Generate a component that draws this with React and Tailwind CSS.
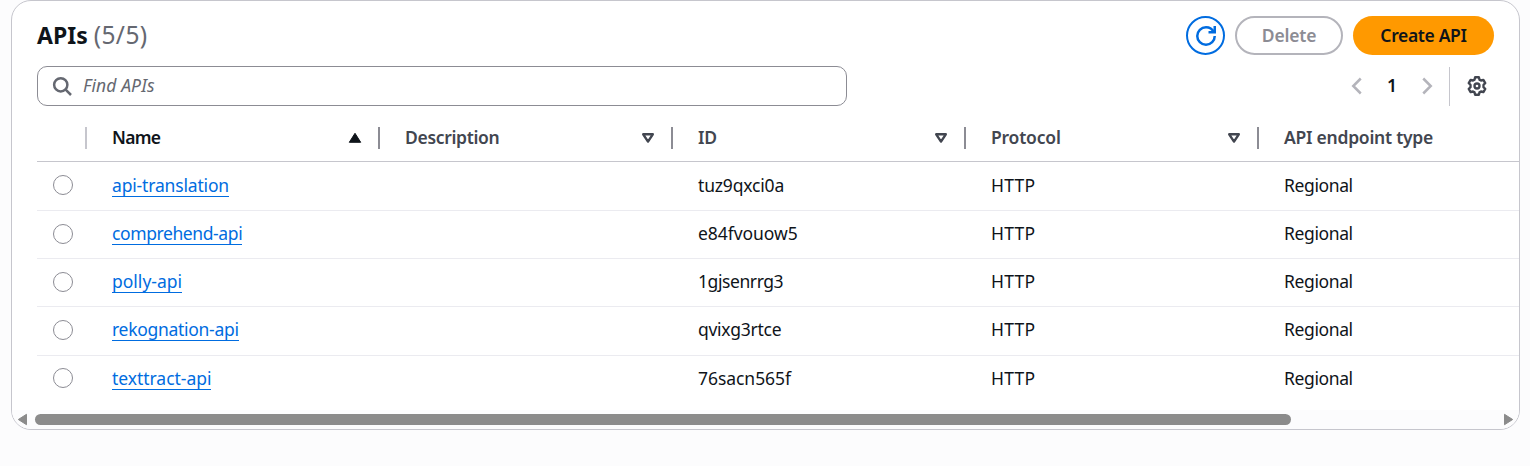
const APIS = [
  { name: "api-translation", id: "tuz9qxci0a", nameClass: "tracking-[-0.17px]", idClass: "tracking-[-0.17px]", rowClass: "h-[49px] pb-[2px]", radioClass: "" },
  { name: "comprehend-api", id: "e84fvouow5", nameClass: "tracking-[-0.4px]", idClass: "tracking-[-0.05px]", rowClass: "h-[48px] pb-[3px]", radioClass: "mt-px" },
  { name: "polly-api", id: "1gjsenrrg3", nameClass: "tracking-[0px]", idClass: "tracking-[-0.42px]", rowClass: "h-[48px] pb-[3px]", radioClass: "mt-px" },
  { name: "rekognation-api", id: "qvixg3rtce", nameClass: "tracking-[-0.29px]", idClass: "tracking-[-0.27px]", rowClass: "h-[49px] pb-[4px]", radioClass: "mt-[2px]" },
  { name: "texttract-api", id: "76sacn565f", nameClass: "tracking-[-0.04px]", idClass: "tracking-[-0.05px]", rowClass: "h-[47px] pb-[3px]", radioClass: "" },
];

const GRID = "grid grid-cols-[50px_293px_293px_293px_293px_1fr]";

function SortableCell({ label, sorted = false, tracking = "" }) {
  return (
    <div className="flex items-center pl-[25px]">
      <span className={`flex-1 pb-px ${tracking} ${sorted ? "text-[#0f141a]" : "text-[#424650]"}`}>{label}</span>
      <svg className="mr-[16px] mt-px h-[12px] w-[14px]" viewBox="0 0 14 12">
        {sorted ? (
          <path d="M7 1.3 12.7 10.3H1.3Z" fill="#0f141a" stroke="#0f141a" strokeLinejoin="round" />
        ) : (
          <path d="M2.2 2.3h9.600L7 9.600Z" fill="none" stroke="#424650" strokeWidth="2.4" strokeLinejoin="round" />
        )}
      </svg>
      <span className="h-[22px] w-[2px] bg-[#8c8c94]" />
    </div>
  );
}

export default function App() {
  return (
    <div className="h-[466px] w-[1530px] overflow-hidden bg-[#fcfcfd] pl-[11px] font-['Noto_Sans',sans-serif] text-[17.5px] leading-[24px] text-[#0f141a]">
      <section className="flex h-[430px] w-[1509px] flex-col overflow-hidden rounded-[20px] border border-[#c6c6cd] bg-white">
        <header className="mt-[15px] flex h-[39px] shrink-0 items-center justify-between pl-[25px] pr-[25px]">
          <h1 className="flex items-baseline pb-[2px] text-[23px] font-bold leading-[30px]">
            <span>APIs</span>
            <span className="ml-[6px] text-[24.5px] font-normal tracking-[0.4px] text-[#656871]">(5/5)</span>
          </h1>
          <div className="flex gap-[10px] font-semibold">
            <button className="flex h-[39px] w-[39px] items-center justify-center rounded-full border-2 border-[#006ce0]">
              <svg className="h-[20px] w-[20px]" viewBox="0 0 16 16" fill="none" stroke="#006ce0" strokeWidth="2">
                <path d="M10 5h5V0" />
                <path d="M15 8c0 3.87-3.13 7-7 7s-7-3.13-7-7 3.13-7 7-7c2.79 0 5.2 1.63 6.33 4" />
              </svg>
            </button>
            <button className="h-[39px] w-[108px] rounded-full border-2 border-[#b4b4bb] pb-[2px] tracking-[-0.2px] text-[#8c8c94]">Delete</button>
            <button className="h-[39px] w-[141px] rounded-full bg-[#ff9900] pb-[2px] tracking-[-0.35px]">Create API</button>
          </div>
        </header>

        <div className="mt-[11px] flex h-[40px] shrink-0 items-center justify-between pl-[25px] pr-[32px]">
          <div className="flex h-[40px] w-[810px] items-center rounded-[10px] border border-[#8c8c94] pl-[14px] text-[#656871]">
            <svg className="h-[20px] w-[20px]" viewBox="0 0 16 16" fill="none" stroke="#656871" strokeWidth="2">
              <circle cx="7" cy="7" r="5.3" />
              <path d="m15.200 15.200-4.500-4.500" />
            </svg>
            <span className="ml-[11px] pb-[2px] italic tracking-[0.1px]">Find APIs</span>
          </div>
          <div className="flex h-[40px] items-center">
            <svg className="h-[20px] w-[20px]" viewBox="0 0 16 16" fill="none" stroke="#b4b4bb" strokeWidth="2">
              <path d="M11 2 5 8l6 6" />
            </svg>
            <span className="w-[50px] pb-[2px] text-center font-semibold">1</span>
            <svg className="h-[20px] w-[20px]" viewBox="0 0 16 16" fill="none" stroke="#b4b4bb" strokeWidth="2">
              <path d="m5 2 6 6-6 6" />
            </svg>
            <span className="ml-[12px] mr-[17px] h-[39px] w-px bg-[#c6c6cd]" />
            <svg className="h-[20px] w-[20px]" viewBox="0 0 16 16" fill="none" stroke="#424650" strokeWidth="1.9" strokeLinejoin="round">
              <path d="M6.500 1h3l.5 1.900 1.200.7 1.900-.5 1.500 2.600L13.200 7v2l1.400 1.300-1.500 2.600-1.900-.5-1.200.7-.5 1.900h-3l-.5-1.900-1.200-.7-1.900.5-1.500-2.600L2.800 9V7L1.400 5.700l1.500-2.600 1.900.5L6 2.900Z" />
              <circle cx="8" cy="8" r="2" />
            </svg>
          </div>
        </div>

        <div className="mt-[8px] pl-[25px]">
          <div className={`${GRID} h-[48px] border-b border-[#c6c6cd] font-semibold`}>
            <div className="flex items-center justify-end">
              <span className="h-[22px] w-[2px] bg-[#c6c6cd]" />
            </div>
            <SortableCell label="Name" sorted tracking="tracking-[-0.7px]" />
            <SortableCell label="Description" tracking="tracking-[-0.33px]" />
            <SortableCell label="ID" tracking="tracking-[-0.3px]" />
            <SortableCell label="Protocol" tracking="tracking-[-0.2px]" />
            <div className="flex items-center pb-px pl-[25px] tracking-[-0.25px] text-[#424650]">API endpoint type</div>
          </div>
          {APIS.map((api, i) => (
            <div
              key={api.id}
              className={`${GRID} ${api.rowClass} items-center ${i < APIS.length - 1 ? "border-b border-[#ebebf0]" : ""}`}
            >
              <span className={`ml-[16px] h-[20px] w-[20px] rounded-full border border-[#8c8c94] ${api.radioClass}`} />
              <div className="flex pl-[25px]">
                <a className={`h-[24px] border-b border-[#006ce0] leading-[24px] text-[#006ce0] ${api.nameClass}`}>{api.name}</a>
              </div>
              <span />
              <span className={`pl-[25px] ${api.idClass}`}>{api.id}</span>
              <span className="pl-[25px] tracking-[0.2px]">HTTP</span>
              <span className="pl-[25px] tracking-[-0.38px]">Regional</span>
            </div>
          ))}
        </div>

        <div className="mt-auto flex h-[19px] shrink-0 items-center bg-[#fcfcfd] pl-[5px] pr-[5px]">
          <svg className="h-[13px] w-[10px]" viewBox="0 0 10 13">
            <path d="M9.500 1.300v10.400L1.300 6.500Z" fill="#8b8b8b" stroke="#8b8b8b" strokeLinejoin="round" />
          </svg>
          <span className="ml-[8px] h-[11px] w-[1256px] rounded-full bg-[#8b8b8b]" />
          <svg className="ml-auto h-[13px] w-[10px]" viewBox="0 0 10 13">
            <path d="M.5 1.300v10.400l8.200-5.200Z" fill="#8b8b8b" stroke="#8b8b8b" strokeLinejoin="round" />
          </svg>
        </div>
      </section>
    </div>
  );
}
